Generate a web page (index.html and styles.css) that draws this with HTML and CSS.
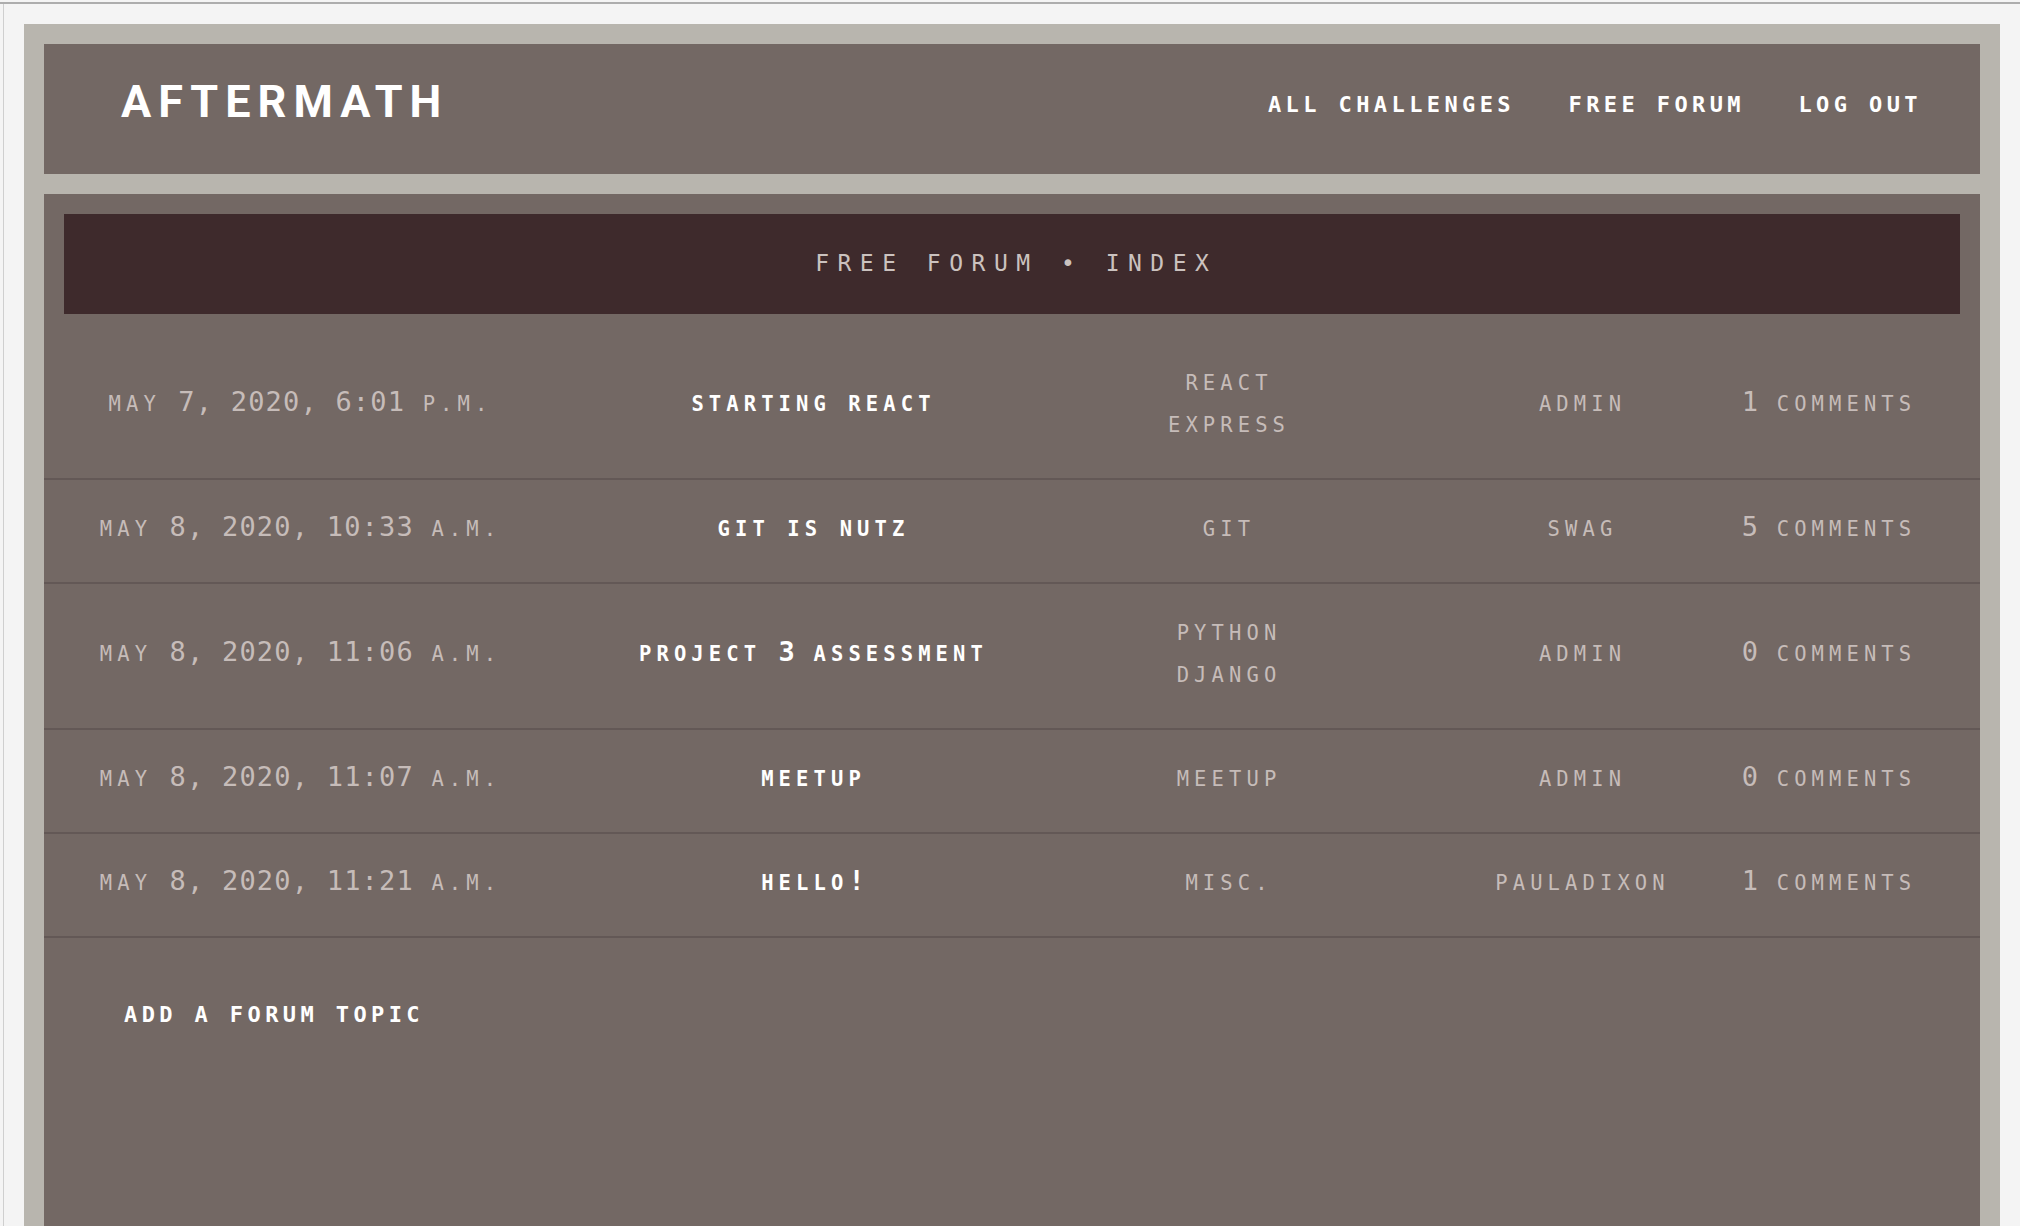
FILE: index.html
```html
<!DOCTYPE html>
<html lang="en">
<head>
<meta charset="utf-8">
<title>Aftermath · Free Forum</title>
<link rel="stylesheet" href="styles.css">
</head>
<body>
<div class="window">
  <div class="frame">
    <header class="site-header">
      <a class="logo" href="#">Aftermath</a>
      <nav class="nav">
        <a href="#">All Challenges</a>
        <a href="#">Free Forum</a>
        <a href="#">Log Out</a>
      </nav>
    </header>
    <main class="panel">
      <h1 class="panel-title">Free Forum • Index</h1>
      <div class="topics">
        <div class="topic">
          <div class="cell"><span>May <span class="n">7, 2020, 6:01</span> p.m.</span></div>
          <div class="cell title"><span>Starting React</span></div>
          <div class="cell"><div>React</div><div>Express</div></div>
          <div class="cell"><span>admin</span></div>
          <div class="cell"><span><span class="n">1</span> comments</span></div>
        </div>
        <div class="topic">
          <div class="cell"><span>May <span class="n">8, 2020, 10:33</span> a.m.</span></div>
          <div class="cell title"><span>Git is nutz</span></div>
          <div class="cell"><div>Git</div></div>
          <div class="cell"><span>swag</span></div>
          <div class="cell"><span><span class="n">5</span> comments</span></div>
        </div>
        <div class="topic">
          <div class="cell"><span>May <span class="n">8, 2020, 11:06</span> a.m.</span></div>
          <div class="cell title"><span>Project <span class="n">3</span> Assessment</span></div>
          <div class="cell"><div>Python</div><div>Django</div></div>
          <div class="cell"><span>admin</span></div>
          <div class="cell"><span><span class="n">0</span> comments</span></div>
        </div>
        <div class="topic">
          <div class="cell"><span>May <span class="n">8, 2020, 11:07</span> a.m.</span></div>
          <div class="cell title"><span>Meetup</span></div>
          <div class="cell"><div>Meetup</div></div>
          <div class="cell"><span>admin</span></div>
          <div class="cell"><span><span class="n">0</span> comments</span></div>
        </div>
        <div class="topic">
          <div class="cell"><span>May <span class="n">8, 2020, 11:21</span> a.m.</span></div>
          <div class="cell title"><span>Hello<span class="n">!</span></span></div>
          <div class="cell"><div>Misc.</div></div>
          <div class="cell"><span>pauladixon</span></div>
          <div class="cell"><span><span class="n">1</span> comments</span></div>
        </div>
      </div>
      <div class="actions">
        <a href="#">Add a Forum Topic</a>
      </div>
    </main>
  </div>
</div>
</body>
</html>
```

FILE: styles.css
```css
html {
  background: #f4f4f4;
}

body {
  margin: 2px 0 0 0;
  border-top: 2px solid #adadad;
  background: #f4f4f4;
  font-family: "DejaVu Sans Mono", "Liberation Mono", monospace;
}

.window {
  margin-left: 3px;
  border-left: 1px solid #cfcfcf;
  padding: 20px 20px 0 20px;
}

.frame {
  background: #b8b5ae;
  padding: 20px 20px 0 20px;
}

.site-header {
  background: #736864;
  height: 130px;
  box-sizing: border-box;
  display: flex;
  align-items: center;
  justify-content: space-between;
  padding: 0 58px 0 77px;
}

.logo {
  font-family: Roboto, "Liberation Sans", Arial, sans-serif;
  font-weight: 700;
  font-size: 45px;
  line-height: 45px;
  letter-spacing: 7px;
  text-transform: uppercase;
  color: #ffffff;
  text-decoration: none;
  margin-bottom: 16px;
}

.nav {
  display: flex;
  gap: 53.5px;
  margin-bottom: 8px;
}

.nav a {
  font-size: 22px;
  line-height: 22px;
  font-weight: 700;
  letter-spacing: 4.4px;
  text-transform: uppercase;
  color: #ffffff;
  text-decoration: none;
}

.panel {
  background: #736864;
  margin-top: 20px;
  min-height: 1012px;
  padding-top: 20px;
}

.panel-title {
  margin: 0 20px 20px 20px;
  height: 100px;
  box-sizing: border-box;
  background: #3e2a2c;
  display: flex;
  align-items: center;
  justify-content: center;
  padding: 0 0 3px 8.5px;
  font-size: 23px;
  font-weight: 400;
  letter-spacing: 8.5px;
  text-transform: uppercase;
  color: #cbc2bf;
}

.topic {
  display: grid;
  grid-template-columns: 508px 518px 313px 394px 99px;
  padding: 28px 0 32px 0;
  border-bottom: 2px solid #635856;
}

.cell {
  display: flex;
  flex-direction: column;
  align-items: center;
  justify-content: center;
  min-width: 0;
  padding-left: 5px;
  font-size: 20.5px;
  line-height: 42px;
  letter-spacing: 5.1px;
  text-transform: uppercase;
  white-space: nowrap;
  color: #c6bcb9;
}

.cell.title {
  color: #ffffff;
  font-weight: 700;
}

.n {
  font-size: 27px;
  letter-spacing: 1.2px;
  line-height: 1;
}

.actions {
  padding: 56px 80px;
}

.actions a {
  font-size: 22px;
  line-height: 42px;
  font-weight: 700;
  letter-spacing: 4.4px;
  text-transform: uppercase;
  color: #ffffff;
  text-decoration: none;
}
```
